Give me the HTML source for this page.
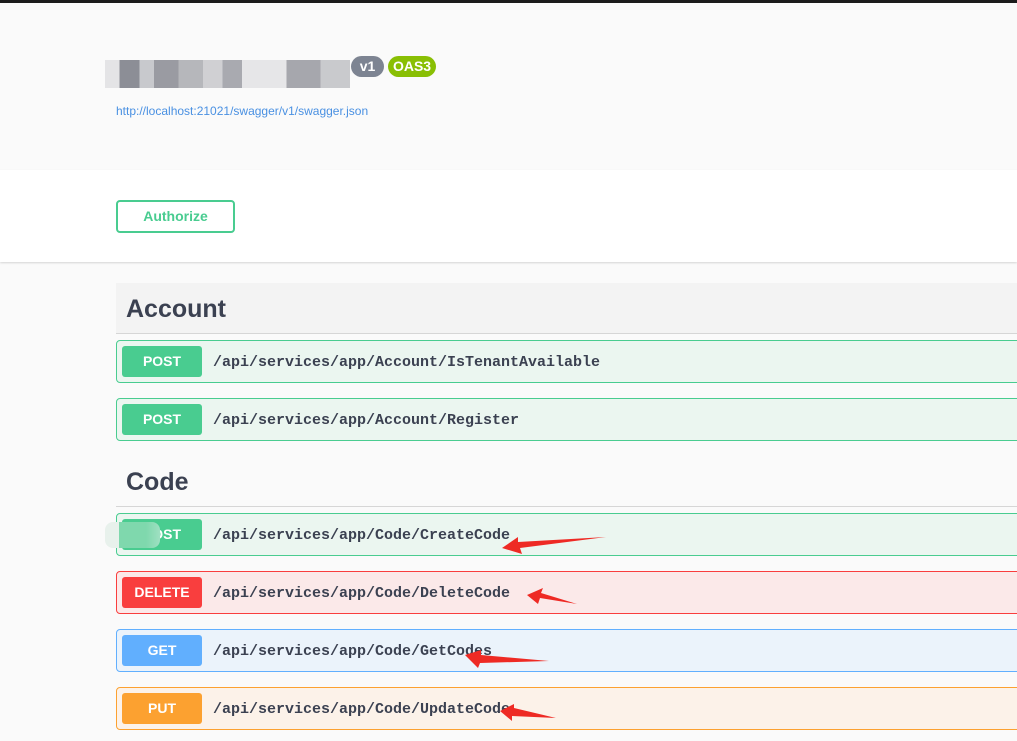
<!DOCTYPE html>
<html><head><meta charset="utf-8"><style>
*{margin:0;padding:0;box-sizing:border-box}
body{width:1017px;height:741px;overflow:hidden;background:#fafafa;font-family:"Liberation Sans",sans-serif;position:relative}
.top{position:absolute;left:0;top:0;width:1017px;height:3px;background:#1b1b1b}
.white{position:absolute;left:0;top:170px;width:1017px;height:92px;background:#fff;box-shadow:0 1px 2px rgba(0,0,0,.15)}
.auth{position:absolute;left:116px;top:200px;width:119px;height:33px;border:2px solid #49cc90;border-radius:4px;color:#49cc90;font-weight:bold;font-size:14px;text-align:center;line-height:29px;background:#fff}
.tag{position:absolute;left:116px;width:901px;height:51px;background:#f3f3f3;border-bottom:1px solid #d6d6d6;font-size:25px;font-weight:bold;color:#3b4151;padding-left:10px;line-height:53px}
.op{position:absolute;left:116px;width:905px;height:43px;border:1px solid;border-radius:4px}
.m{position:absolute;left:5px;top:5px;width:80px;height:31px;border-radius:3px;color:#fff;font-weight:bold;font-size:14px;text-align:center;line-height:31px}
.p{position:absolute;left:96px;top:1px;line-height:41px;font-family:"Liberation Mono",monospace;font-size:15px;font-weight:bold;color:#3b4151}
.post{background:#ebf6f0;border-color:#49cc90}.post .m{background:#49cc90}
.del{background:#fbe9e9;border-color:#f93e3e}.del .m{background:#f93e3e}
.get{background:#ebf3fb;border-color:#61affe}.get .m{background:#61affe}
.put{background:#fcf2e9;border-color:#fca130}.put .m{background:#fca130}
</style></head><body>
<div class="top"></div>
<div style="position:absolute;left:105px;top:60px;width:245px;height:28px;background:linear-gradient(90deg,#e4e4e6 0 6%,#8c8e96 6% 14%,#c8c9cd 14% 20%,#9a9ba2 20% 30%,#b6b7bb 30% 40%,#d0d0d3 40% 48%,#a9aab0 48% 56%,#e6e6e8 56% 74%,#a6a7ad 74% 88%,#c9cacd 88%)"></div>
<div style="position:absolute;left:351px;top:56px;width:33px;height:21px;border-radius:11px;background:#7d8492;color:#fff;font-weight:bold;font-size:14px;text-align:center;line-height:21px">v1</div>
<div style="position:absolute;left:388px;top:56px;width:48px;height:21px;border-radius:11px;background:#89bf04;color:#fff;font-weight:bold;font-size:14px;text-align:center;line-height:21px">OAS3</div>
<div style="position:absolute;left:116px;top:104px;font-size:12px;color:#4990e2">http://localhost:21021/swagger/v1/swagger.json</div>
<div class="white"></div>
<div class="auth">Authorize</div>
<div class="tag" style="top:283px">Account</div>
<div class="op post" style="top:340px"><div class="m">POST</div><div class="p">/api/services/app/Account/IsTenantAvailable</div></div>
<div class="op post" style="top:398px"><div class="m">POST</div><div class="p">/api/services/app/Account/Register</div></div>
<div class="tag" style="top:456px;background:#fafafa">Code</div>
<div class="op post" style="top:513px"><div class="m">POST</div><div class="p">/api/services/app/Code/CreateCode</div></div>
<div style="position:absolute;left:105px;top:522px;width:55px;height:26px;background:linear-gradient(90deg,#e8f1ec 0 25%,#7fd8ad 25% 75%,#9fe0c2);border-radius:8px"></div>
<div class="op del" style="top:571px"><div class="m">DELETE</div><div class="p">/api/services/app/Code/DeleteCode</div></div>
<div class="op get" style="top:629px"><div class="m">GET</div><div class="p">/api/services/app/Code/GetCodes</div></div>
<div class="op put" style="top:687px"><div class="m">PUT</div><div class="p">/api/services/app/Code/UpdateCode</div></div>
<svg style="position:absolute;left:0;top:0" width="1017" height="741">
<g fill="#ee2a24">
<polygon points="502,548 518,537 518,542 606,537 520,548 522,554"/>
<polygon points="527,595 543,588 541,593 577,604 540,598 538,604"/>
<polygon points="465,655 481,650 481,655 549,661 480,663 478,668"/>
<polygon points="500,711 514,704 514,708 556,718 512,716 512,721"/>
</g></svg>
</body></html>
